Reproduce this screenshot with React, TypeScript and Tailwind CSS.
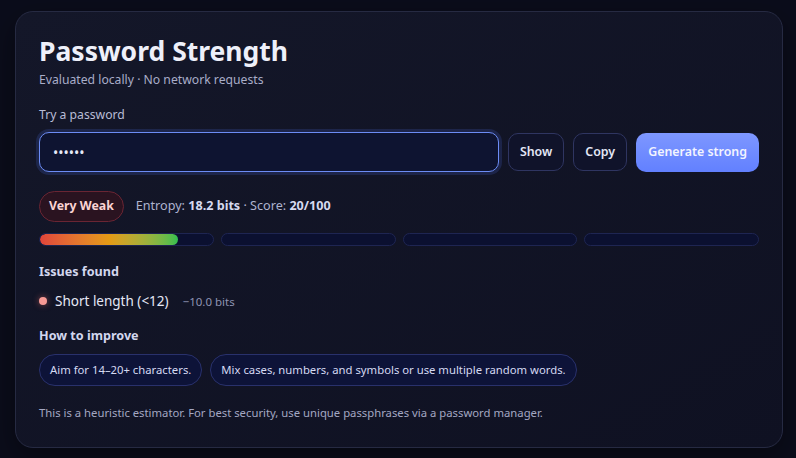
import React, { useState } from "react";

const segments = [80, 0, 0, 0];

export default function App() {
  const [shown, setShown] = useState(false);
  const password = "hunter";

  return (
    <div
      className="min-h-screen w-full bg-[#0b0d1b] pl-[15px] pr-[13px] pt-[11px] pb-3"
      style={{ fontFamily: '"Segoe UI", "Noto Sans", "Open Sans", sans-serif' }}
    >
      <div className="rounded-[18px] border border-[#262a42] bg-gradient-to-br from-[#141729] to-[#0f1122] px-[23px] pt-[21px] pb-[26px] shadow-[0_10px_30px_rgba(0,0,0,0.4)]">
        <h1 className="text-[26.5px] font-bold leading-[36px] text-[#eef0fa]">Password Strength</h1>
        <p className="mt-[2px] text-[12.2px] leading-[18px] text-[#a9adc8]">Evaluated locally · No network requests</p>

        <label className="mt-[17px] block text-[12.2px] leading-[18px] text-[#b8bcd6]">Try a password</label>
        <div className="mt-[8px] flex items-center gap-[9px]">
          <input
            type={shown ? "text" : "password"}
            defaultValue={password}
            className="h-[40px] flex-1 rounded-[10px] border border-[#6c8cf5] bg-[#0e1431] px-[13px] text-[14px] text-[#e6e9f7] shadow-[0_0_0_3px_rgba(70,95,200,0.22)] outline-none"
          />
          <button
            onClick={() => setShown(!shown)}
            className="h-[38px] rounded-[10px] border border-[#2f3561] bg-[#10132a] px-[11px] text-[12.4px] font-semibold text-[#e3e6f5]"
          >
            Show
          </button>
          <button className="h-[38px] rounded-[10px] border border-[#2f3561] bg-[#10132a] px-[11px] text-[12.4px] font-semibold text-[#e3e6f5]">
            Copy
          </button>
          <button className="h-[39px] rounded-[10px] bg-gradient-to-b from-[#7e97ff] to-[#6280ff] px-[12px] text-[12.4px] font-semibold text-[#f2f4ff]">
            Generate strong
          </button>
        </div>

        <div className="mt-[19px] flex items-center gap-[12px]">
          <span className="flex h-[31px] items-center rounded-full border border-[#6a2533] bg-[#2a1320] px-[9px] text-[12.3px] font-bold text-[#fbd3d3]">
            Very Weak
          </span>
          <span className="text-[12.6px] text-[#aeb3cf]">
            Entropy: <b className="text-[#d6daf0]">18.2 bits</b> · Score: <b className="text-[#d6daf0]">20/100</b>
          </span>
        </div>

        <div className="mt-[11px] grid grid-cols-4 gap-[7px]">
          {segments.map((v, i) => (
            <div key={i} className="h-[13px] overflow-hidden rounded-full border border-[#1e2552] bg-[#0b1030]">
              <div
                className="h-full rounded-full bg-gradient-to-r from-[#e0443a] via-[#e49a14] to-[#2fbf4f]"
                style={{ width: `${v}%` }}
              />
            </div>
          ))}
        </div>

        <h3 className="mt-[17px] text-[12.6px] font-bold leading-[18px] text-[#d3d7ee]">Issues found</h3>
        <div className="mt-[10px] flex items-center">
          <span className="h-[8px] w-[8px] rounded-full bg-[#f79a95] shadow-[0_0_6px_rgba(247,120,110,0.5)]" />
          <span className="ml-[8px] text-[13.5px] text-[#e5e8f6]">Short length (&lt;12)</span>
          <span className="ml-[14px] text-[11.5px] text-[#8e93b2]">−10.0 bits</span>
        </div>

        <h3 className="mt-[16px] text-[12.6px] font-bold leading-[18px] text-[#d3d7ee]">How to improve</h3>
        <div className="mt-[9px] flex flex-wrap gap-[8px]">
          {["Aim for 14–20+ characters.", "Mix cases, numbers, and symbols or use multiple random words."].map((t) => (
            <span
              key={t}
              className="flex h-[32px] items-center rounded-full border border-[#29316c] bg-[#0d1338] px-[10px] text-[11.3px] text-[#d5d9f2]"
            >
              {t}
            </span>
          ))}
        </div>

        <p className="mt-[19px] text-[11.3px] leading-[16px] text-[#a3a7c2]">
          This is a heuristic estimator. For best security, use unique passphrases via a password manager.
        </p>
      </div>
    </div>
  );
}
